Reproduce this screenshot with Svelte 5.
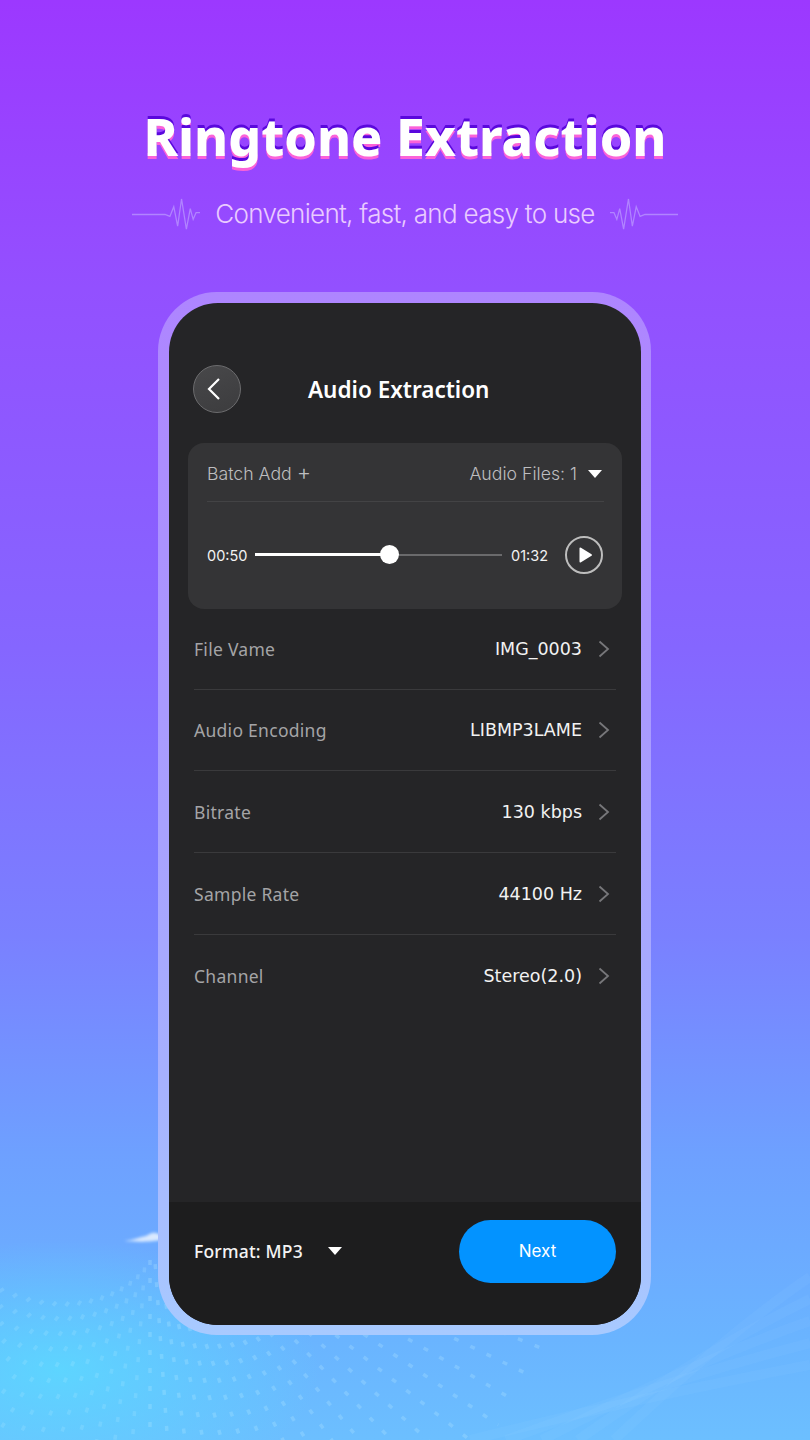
<script>
  const rows = [
    ['File Vame', 'IMG_0003'],
    ['Audio Encoding', 'LIBMP3LAME'],
    ['Bitrate', '130 kbps'],
    ['Sample Rate', '44100 Hz'],
    ['Channel', 'Stereo(2.0)']
  ];
  const wave = 'M0 17H34L39 19L43 9L47 29L51 1L56 32L60 11L63 22L66 15H70';

  // fan of dotted rays that makes up the decorative wave at the foot of the page
  const cx = 150, cy = 1190;
  const rays = [];
  for (let a = -84; a <= 70; a += 4) {
    const rad = (a * Math.PI) / 180;
    const sin = Math.sin(rad), cos = Math.cos(rad);
    // rays to the left start further out so the fan reads as a soft field
    const start = a < 0 ? 70 + Math.abs(a) * 1.9 : 70 + a * 1.1;
    const strength = a < 0 ? 0.18 : 0.24;
    rays.push({
      x1: cx + sin * start,
      y1: cy + cos * start,
      x2: cx + sin * 420,
      y2: cy + cos * 420,
      o: strength
    });
  }
  const arcs = [0, 1, 2, 3, 4].map((i) => ({
    d: `M${470 + i * 36} ${1440} Q${650 + i * 20} ${1395 - i * 16} 810 ${1365 - i * 22}`,
    o: 0.05
  }));
</script>

<div class="page">
  <div class="glow"></div>
  <svg class="fan" width="810" height="1440" viewBox="0 0 810 1440" aria-hidden="true">
    {#each rays as r}
      <line x1={r.x1} y1={r.y1} x2={r.x2} y2={r.y2} stroke-opacity={r.o} />
    {/each}
    {#each arcs as a}
      <path d={a.d} stroke-opacity={a.o} />
    {/each}
  </svg>
  <svg class="streak" width="60" height="22" viewBox="0 0 60 22" aria-hidden="true">
    <path d="M2 19C12 18 18 15 24 14C28 12 30 10 34 11C37 12 39 14 42 11C46 6 52 6 58 7V14C50 15 44 17 38 18C30 20 14 20 2 19Z" />
  </svg>

  <header class="hero">
    <h1>Ringtone Extraction</h1>
    <div class="sub">
      <svg width="68" height="33" viewBox="0 0 70 34" aria-hidden="true"><path d={wave} /></svg>
      <span>Convenient, fast, and easy to use</span>
      <svg class="flip" width="68" height="33" viewBox="0 0 70 34" aria-hidden="true"><path d={wave} /></svg>
    </div>
  </header>

  <div class="frame">
    <div class="phone">
      <div class="head">
        <button class="back" aria-label="Back">
          <svg width="16" height="24" viewBox="0 0 16 24"><path d="M13 2L3 12L13 22" /></svg>
        </button>
        <h2>Audio Extraction</h2>
      </div>

      <section class="card">
        <div class="card-top">
          <span class="add">Batch Add <b>+</b></span>
          <span class="files">Audio Files: 1 <i class="tri"></i></span>
        </div>
        <div class="player">
          <span class="time">00:50</span>
          <div class="track">
            <div class="fill"></div>
            <div class="knob"></div>
          </div>
          <span class="time">01:32</span>
          <div class="play">
            <svg width="15" height="16" viewBox="0 0 15 16"><path d="M1.5 1.5a1 1 0 0 1 1.5-.8l10.500 6.500a1 1 0 0 1 0 1.600L3 15.300a1 1 0 0 1-1.500-.8z" /></svg>
          </div>
        </div>
      </section>

      <ul class="list">
        {#each rows as [label, value]}
          <li>
            <span class="label">{label}</span>
            <span class="value">{value}</span>
            <svg class="chev" width="12" height="18" viewBox="0 0 12 18"><path d="M1.500 1.500L10 9L1.500 16.500" /></svg>
          </li>
        {/each}
      </ul>

      <footer class="foot">
        <span class="format">Format: MP3</span>
        <i class="tri"></i>
        <button class="next">Next</button>
      </footer>
    </div>
  </div>
</div>

<style>
  :global(body) { margin: 0; }
  .page {
    position: relative;
    width: 810px;
    height: 1440px;
    overflow: hidden;
    box-sizing: border-box;
    padding-top: 101px;
    background: linear-gradient(180deg, #9c38ff 0%, #9350ff 20%, #8566ff 45%, #7a80ff 65%, #6ea0ff 80%, #6ab4ff 93%, #6cbfff 100%);
    font-family: "Noto Sans", sans-serif;
  }
  .glow {
    position: absolute;
    left: -200px;
    top: 1240px;
    width: 520px;
    height: 260px;
    background: radial-gradient(ellipse closest-side, rgba(88, 225, 255, .7), rgba(88, 225, 255, 0));
  }
  .fan {
    position: absolute;
    left: 0;
    top: 0;
    fill: none;
    stroke: #bfeeff;
    stroke-width: 3.500px;
    stroke-dasharray: 5 13;
  }
  .fan path { stroke-width: 10px; stroke-dasharray: none; }
  .streak {
    position: absolute;
    left: 122px;
    top: 1222px;
    fill: #fff;
    opacity: .75;
    filter: blur(1.500px);
  }
  .hero { position: relative; text-align: center; }
  h1 {
    margin: 0;
    height: 70px;
    font-size: 51.800px;
    line-height: 70px;
    font-weight: 800;
    color: #fff;
    text-shadow: 0 -3px 0 #5a08dd, 0 3px 0 #fb62d8;
  }
  .sub {
    display: flex;
    justify-content: center;
    align-items: center;
    gap: 15px;
    margin-top: 17px;
    height: 50px;
    font-family: Inter, sans-serif;
    font-size: 26px;
    font-weight: 300;
    letter-spacing: -.7px;
    color: #eacbff;
  }
  .sub svg { margin-top: 3px; }
  .sub path { fill: none; stroke: #b184ff; stroke-width: 1.300px; }
  .flip { transform: scaleX(-1); }
  .frame {
    position: relative;
    box-sizing: border-box;
    width: 493px;
    height: 1043px;
    margin: 54px 0 0 158px;
    padding: 11px 10px 10px 11px;
    border-radius: 59px;
    background: linear-gradient(180deg, #ae85ff 0%, #a99aff 40%, #a6b0ff 75%, #a8caff 100%);
  }
  .phone {
    display: flex;
    flex-direction: column;
    height: 100%;
    border-radius: 49px;
    overflow: hidden;
    background: #252527;
    color: #fff;
  }
  .head {
    display: flex;
    align-items: center;
    height: 48px;
    margin: 62px 0 30px;
    padding-left: 24px;
  }
  .back {
    display: flex;
    align-items: center;
    justify-content: center;
    box-sizing: border-box;
    width: 48px;
    height: 48px;
    padding: 0 7px 0 0;
    border: 1px solid #6c6c6e;
    border-radius: 50%;
    background: linear-gradient(160deg, #48484a, #3c3c3e);
  }
  .back path { fill: none; stroke: #fff; stroke-width: 2.200px; }
  h2 {
    margin: 2px 0 0 67px;
    font-size: 22.500px;
    line-height: 32px;
    font-weight: 600;
  }
  .card {
    box-sizing: border-box;
    height: 166px;
    margin: 0 19px;
    padding: 0 18px 0 19px;
    border-radius: 16px;
    background: #343436;
  }
  .card-top {
    display: flex;
    justify-content: space-between;
    align-items: center;
    height: 59px;
    padding: 3px 2px 0 0;
    box-sizing: border-box;
    border-bottom: 1px solid #434345;
    font-family: Inter, sans-serif;
    font-size: 17.700px;
    font-weight: 300;
    color: #bdbdbf;
  }
  .add b { font-size: 22px; line-height: 0; font-weight: 300; }
  .files { display: flex; align-items: center; gap: 11px; }
  .tri {
    display: block;
    width: 0;
    height: 0;
    border-left: 7.500px solid transparent;
    border-right: 7.500px solid transparent;
    border-top: 8px solid #fff;
  }
  .player {
    display: flex;
    align-items: center;
    height: 105px;
    margin-right: 1px;
    box-sizing: border-box;
  }
  .time {
    width: 40px;
    padding-top: 1px;
    font-family: Inter, sans-serif;
    font-size: 14.500px;
    font-weight: 400;
    color: #f2f2f2;
  }
  .track {
    position: relative;
    width: 247px;
    height: 2px;
    margin: 0 9px 0 8px;
    background: #6a6a6c;
  }
  .fill {
    width: 135px;
    height: 3px;
    margin-top: -.5px;
    background: #fff;
  }
  .knob {
    position: absolute;
    left: 125px;
    top: -8.500px;
    width: 19px;
    height: 19px;
    border-radius: 50%;
    background: #fff;
  }
  .play {
    display: flex;
    align-items: center;
    justify-content: center;
    box-sizing: border-box;
    width: 38px;
    height: 38px;
    margin-left: auto;
    padding-left: 2px;
    border: 2px solid #bdbdbd;
    border-radius: 50%;
  }
  .play path { fill: #fff; }
  .list {
    flex: 1;
    margin: 0;
    padding: 0 25px;
    list-style: none;
  }
  .list li {
    display: flex;
    align-items: center;
    box-sizing: border-box;
    height: 82px;
    border-bottom: 1px solid #3a3a3c;
  }
  .list li:nth-child(-n+2) { height: 81px; }
  .list li:last-child { border-bottom: 0; }
  .label { font-size: 17.500px; color: #a4a4a6; letter-spacing: .28px; }
  .value { margin-left: auto; font-family: "DejaVu Sans", sans-serif; font-size: 17.500px; font-weight: 400; color: #f2f2f2; }
  .chev { margin: 0 6px 0 16px; }
  .chev path { fill: none; stroke: #77777a; stroke-width: 1.800px; }
  .foot {
    display: flex;
    align-items: center;
    box-sizing: border-box;
    height: 123px;
    padding: 0 25px 25px;
    background: #1d1d1e;
  }
  .format { font-size: 17.500px; font-weight: 500; color: #f4f4f4; letter-spacing: .2px; margin-right: 25px; }
  .next {
    width: 157px;
    height: 63px;
    margin-left: auto;
    border: 0;
    border-radius: 32px;
    background: #0393ff;
    color: #fff;
    font-family: Inter, sans-serif;
    font-size: 17px;
    font-weight: 400;
  }
</style>
